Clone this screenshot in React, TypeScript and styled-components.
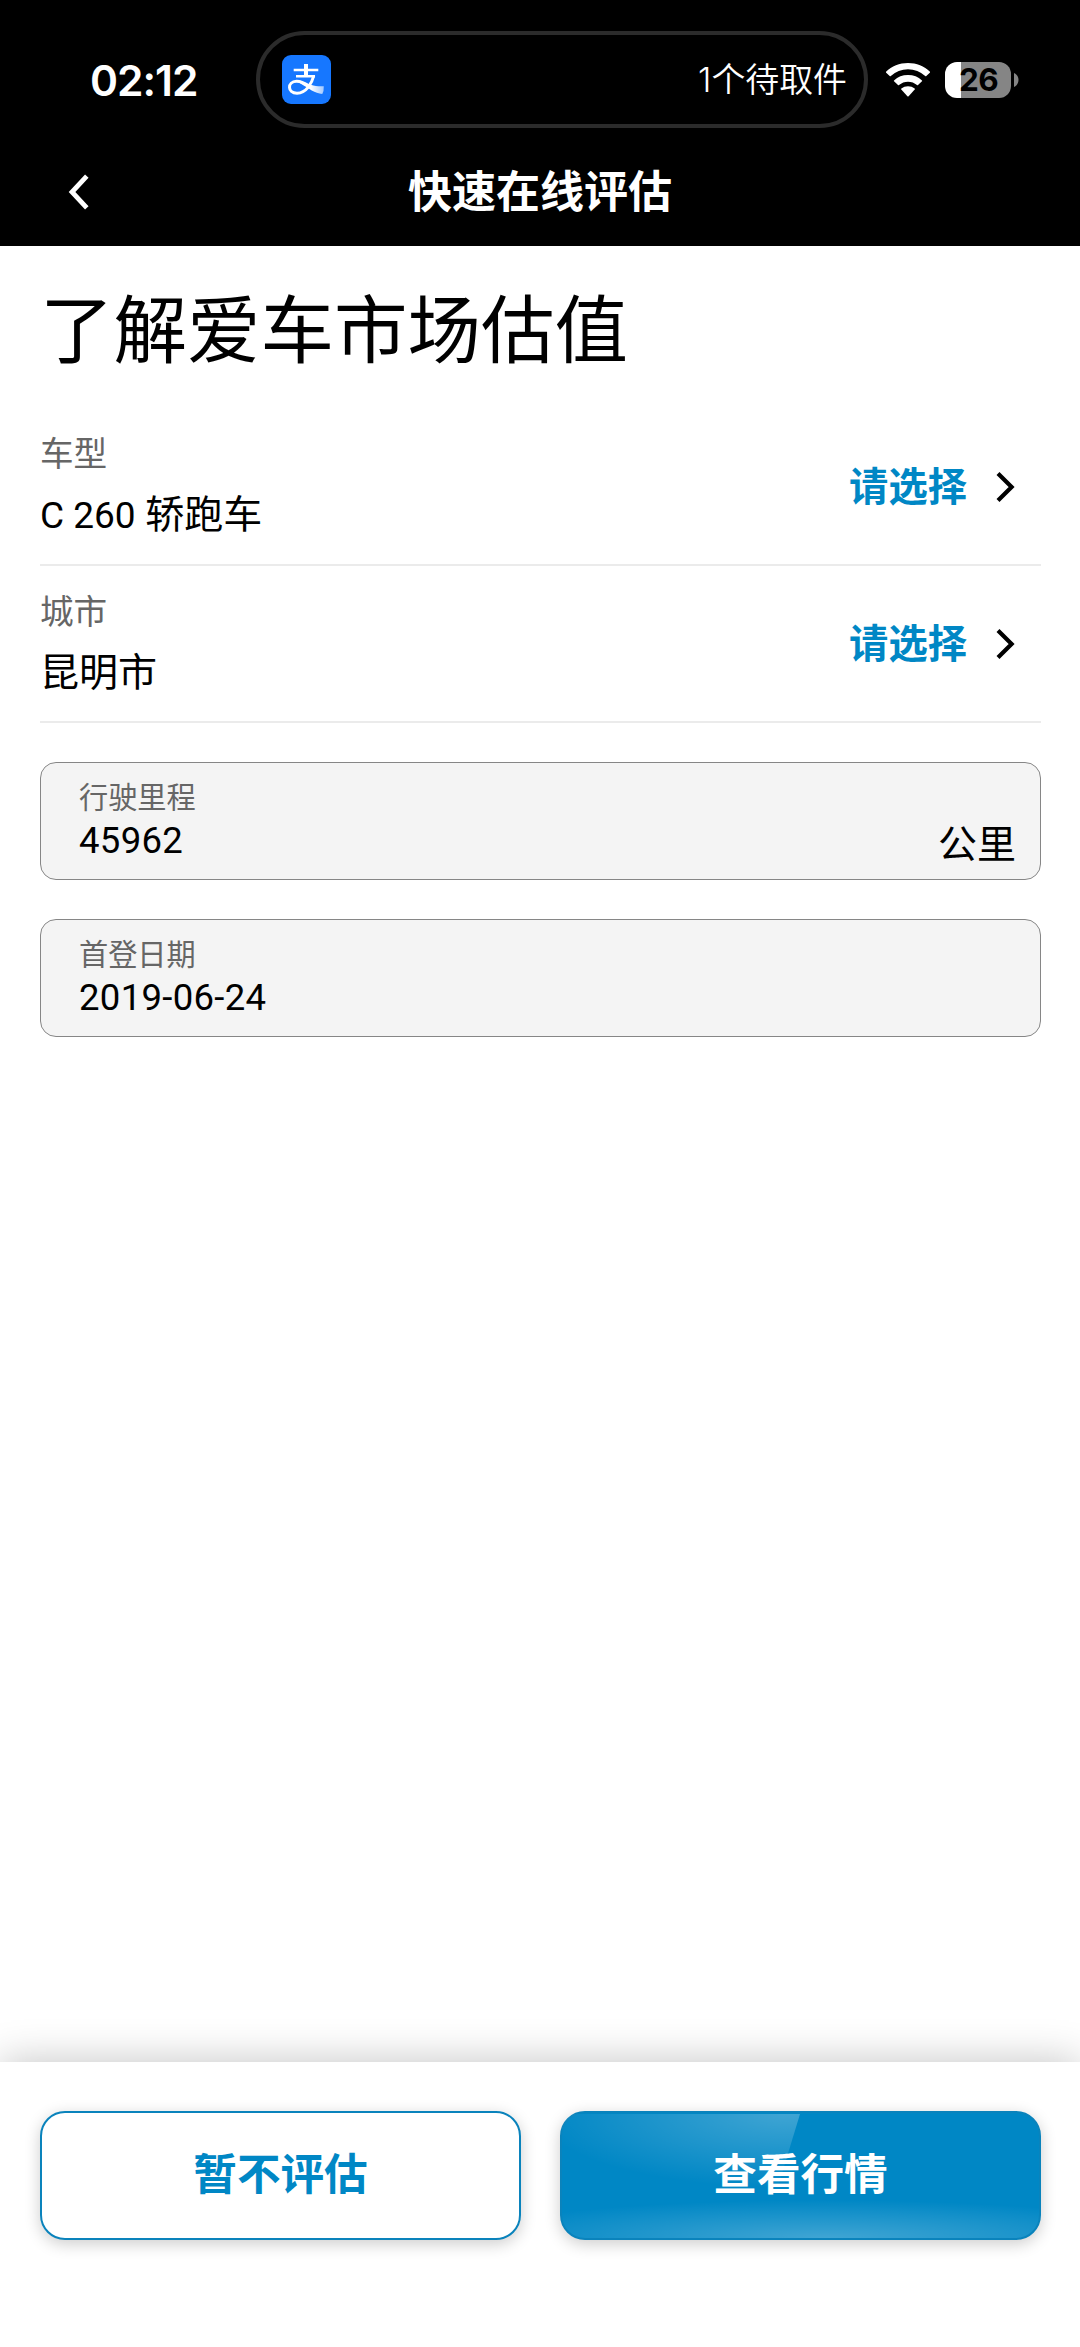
import React from "react";
import styled, { createGlobalStyle } from "styled-components";

const cjk = `"Noto Sans CJK SC", sans-serif`;

const Global = createGlobalStyle`
  * { box-sizing: border-box; }
  html, body { margin: 0; padding: 0; background: #fff; }
  body { font-family: ${cjk}; color: #000; }
  button { font: inherit; border: 0; background: none; padding: 0; margin: 0; }
`;

const Screen = styled.div`
  width: 1080px;
  height: 2347px;
  display: flex;
  flex-direction: column;
  overflow: hidden;
  background: #fff;
`;

const Header = styled.header`
  flex: none;
  height: 246px;
  background: #000;
  color: #fff;
`;

const StatusBar = styled.div`
  display: flex;
  height: 158px;
  padding-top: 31px;
  align-items: flex-start;
`;

const Clock = styled.div`
  width: 256px;
  padding-left: 90px;
  height: 98px;
  font: 600 42.5px/99px Inter, sans-serif;
  letter-spacing: -1px;
  color: #fff;
`;

const Island = styled.div`
  width: 612px;
  height: 97px;
  border: 4px solid #2b2b2b;
  border-radius: 49px;
  display: flex;
  align-items: center;
  justify-content: space-between;
  padding: 0 17px 0 22px;
`;

const IslandText = styled.span`
  font: 350 33.9px/48px Inter, ${cjk};
`;

const Indicators = styled.div`
  display: flex;
  align-items: center;
  height: 97px;
  padding-left: 18px;
  gap: 15px;
`;

const Battery = styled.div`
  display: flex;
  align-items: center;
  gap: 3px;
`;

const Cell = styled.div`
  width: 66px;
  height: 36px;
  border-radius: 12px;
  background: linear-gradient(90deg, #fff 0 16px, #858585 16px);
  color: #000;
  text-align: center;
  padding-left: 1px;
  font: 700 31.5px/36px Inter, sans-serif;
  letter-spacing: -0.6px;
`;

const NavBar = styled.nav`
  display: grid;
  grid-template-columns: 160px 1fr 160px;
  align-items: center;
  height: 67px;
`;

const Back = styled.button`
  display: flex;
  padding-left: 68px;
`;

const NavTitle = styled.h1`
  margin: 0;
  padding-bottom: 5px;
  text-align: center;
  font-size: 44px;
  line-height: 62px;
  font-weight: 700;
`;

const Main = styled.main`
  flex: 1;
  padding: 0 39px 0 40px;
`;

const Heading = styled.h2`
  margin: 27px 0 0 0;
  font-size: 73.5px;
  line-height: 104px;
  font-weight: 400;
`;

const List = styled.div`
  margin-top: 32px;
`;

const Row = styled.div`
  height: 157px;
  display: flex;
  justify-content: space-between;
  align-items: center;
  border-bottom: 2px solid #ebebeb;
`;

const RowText = styled.div`
  display: flex;
  flex-direction: column;
  gap: 9px;
  padding-bottom: 1px;
`;

const Label = styled.span`
  font-size: 33.6px;
  line-height: 50px;
  color: #666;
`;

const Value = styled.span`
  font: 400 39px/58px Roboto, ${cjk};
`;

const Latin = styled.span`
  font-size: 37px;
`;

const Pick = styled.button`
  display: flex;
  align-items: center;
  gap: 28px;
  padding-right: 26px;
  color: #0087c5;
  font-size: 39.3px;
  line-height: 58px;
  font-weight: 700;
`;

const PickText = styled.span`
  padding-bottom: 6px;
`;

const Field = styled.div`
  height: 118px;
  margin-top: 39px;
  display: flex;
  justify-content: space-between;
  border: 1.4px solid #868686;
  border-radius: 16px;
  background: #f4f4f4;
  padding: 10px 24px 0 38px;
`;

const FieldText = styled.div`
  display: flex;
  flex-direction: column;
`;

const FieldLabel = styled.span`
  font-size: 29.2px;
  line-height: 44px;
  color: #666;
`;

const FieldValue = styled.span`
  margin-top: 2px;
  font: 400 36.5px/44px Roboto, sans-serif;
  letter-spacing: 0.3px;
`;

const Unit = styled.span`
  padding-top: 40px;
  font-size: 39px;
  line-height: 56px;
`;

const Footer = styled.footer`
  flex: none;
  height: 285px;
  padding: 49px 39px 0 40px;
  display: grid;
  grid-template-columns: 1fr 1fr;
  column-gap: 39px;
  align-items: start;
  background: #fff;
  box-shadow: 0 0 40px rgba(0, 0, 0, 0.24);
`;

const Action = styled.button<{ $primary?: boolean }>`
  height: 129px;
  border-radius: 25px;
  font-size: 43.6px;
  line-height: 64px;
  font-weight: 700;
  color: ${(p) => (p.$primary ? "#fff" : "#0087c5")};
  border: 2.5px solid #0a83bc;
  box-shadow: 0 4px 16px rgba(0, 0, 0, 0.2);
  background: ${(p) =>
    p.$primary
      ? `radial-gradient(ellipse 360px 38px at 55% 100%, rgba(255,255,255,.25), rgba(255,255,255,0)), #0087c5`
      : "#fff"};
  display: grid;
  grid-template: 100% / 100%;
  place-items: center;
`;

const Stack = styled.span`
  grid-area: 1 / 1;
  padding-bottom: 9px;
`;

const Gloss = styled.svg`
  grid-area: 1 / 1;
  place-self: start;
`;

function Alipay() {
  return (
    <svg width="49" height="49" viewBox="0 0 49 49">
      <defs>
        <linearGradient id="tail" x1="0.45" x2="1" y1="0" y2="0">
          <stop offset="0" stopColor="#fff" />
          <stop offset="1" stopColor="#fff" stopOpacity=".6" />
        </linearGradient>
      </defs>
      <rect width="49" height="49" rx="9" fill="#1677ff" />
      <g fill="none" stroke="#fff" strokeWidth="2.6">
        <path d="M11.700 15H36.300M14 21.300H33" />
        <path d="M24 9V21" strokeWidth="4" />
        <path d="M31.800 20.500C30 28 24.500 38 15 38.200C5.200 38.200 5 26.600 14.500 26.300C19 26.200 23 28.500 27 31" strokeWidth="3" />
      </g>
      <path d="M18 25.500C27 29.500 34 32 41.800 31.200Q42 36 40.300 39C33 38.600 27 33.500 18 28.300Z" fill="url(#tail)" />
    </svg>
  );
}

function Wifi() {
  return (
    <svg width="44" height="34" viewBox="0 0 44 34" fill="#fff">
      <path d="M22 0C13.500 0 5.700 3.300 0 8.700Q-.3 9.200 .2 9.700L3.700 13.100Q4.300 13.500 4.800 13.100A25 25 0 0 1 39.200 13.100Q39.700 13.500 40.300 13.100L43.800 9.700Q44.300 9.200 44 8.700C38.300 3.300 30.500 0 22 0Z" />
      <path d="M22 12A20.500 20.500 0 0 0 8 17.400Q7.600 17.900 8 18.300L12 22Q12.500 22.400 13 22A13.800 13.800 0 0 1 31 22Q31.500 22.400 32 22L36 18.300Q36.400 17.900 36 17.400A20.500 20.500 0 0 0 22 12Z" />
      <path d="M22 23.300A11 11 0 0 0 15.300 25.600Q14.900 26 15.300 26.500L21.400 33.200Q22 33.700 22.600 33.200L28.700 26.500Q29.100 26 28.700 25.600A11 11 0 0 0 22 23.300Z" />
    </svg>
  );
}

function Chevron() {
  return (
    <svg width="20" height="30" viewBox="0 0 20 30">
      <path d="M3 1.600L16.600 15L3 28.400" fill="none" stroke="#000" strokeWidth="4.200" />
    </svg>
  );
}

function PickRow({ label, children }: { label: string; children: React.ReactNode }) {
  return (
    <Row>
      <RowText>
        <Label>{label}</Label>
        <Value>{children}</Value>
      </RowText>
      <Pick>
        <PickText>请选择</PickText>
        <Chevron />
      </Pick>
    </Row>
  );
}

export default function App() {
  return (
    <Screen>
      <Global />
      <Header>
        <StatusBar>
          <Clock>02:12</Clock>
          <Island>
            <Alipay />
            <IslandText>1个待取件</IslandText>
          </Island>
          <Indicators>
            <Wifi />
            <Battery>
              <Cell>26</Cell>
              <svg width="5" height="14" viewBox="0 0 5 14">
                <path d="M0 0C6 3 6 11 0 14Z" fill="#858585" />
              </svg>
            </Battery>
          </Indicators>
        </StatusBar>
        <NavBar>
          <Back aria-label="返回">
            <svg width="22" height="36" viewBox="0 0 22 36">
              <path d="M18.800 2.200L4 18L18.800 33.800" fill="none" stroke="#fff" strokeWidth="4.800" />
            </svg>
          </Back>
          <NavTitle>快速在线评估</NavTitle>
        </NavBar>
      </Header>
      <Main>
        <Heading>了解爱车市场估值</Heading>
        <List>
          <PickRow label="车型">
            <Latin>C 260</Latin> 轿跑车
          </PickRow>
          <PickRow label="城市">昆明市</PickRow>
        </List>
        <Field>
          <FieldText>
            <FieldLabel>行驶里程</FieldLabel>
            <FieldValue>45962</FieldValue>
          </FieldText>
          <Unit>公里</Unit>
        </Field>
        <Field>
          <FieldText>
            <FieldLabel>首登日期</FieldLabel>
            <FieldValue>2019-06-24</FieldValue>
          </FieldText>
        </Field>
      </Main>
      <Footer>
        <Action>
          <Stack>暂不评估</Stack>
        </Action>
        <Action $primary>
          <Gloss width="240" height="80" viewBox="0 0 240 80">
            <defs>
              <radialGradient id="gloss" gradientUnits="userSpaceOnUse" cx="0" cy="0" r="1" gradientTransform="translate(225 0) scale(250 75)">
                <stop offset="0" stopColor="#fff" stopOpacity=".25" />
                <stop offset="1" stopColor="#fff" stopOpacity="0" />
              </radialGradient>
            </defs>
            <path d="M0 1H238L214 80H0Z" fill="url(#gloss)" />
          </Gloss>
          <Stack>查看行情</Stack>
        </Action>
      </Footer>
    </Screen>
  );
}
